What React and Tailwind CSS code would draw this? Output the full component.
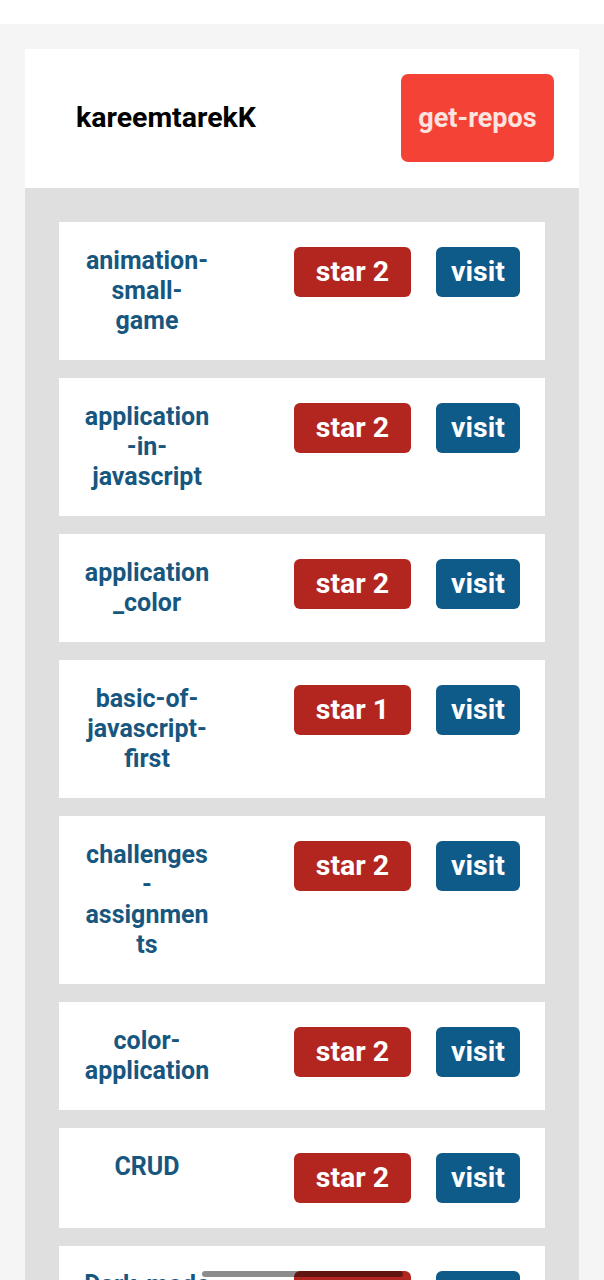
const repos = [
  { name: "animation-small-game", stars: 2 },
  { name: "application-in-javascript", stars: 2 },
  { name: "application_color", stars: 2 },
  { name: "basic-of-javascript-first", stars: 1 },
  { name: "challenges-assignments", stars: 2 },
  { name: "color-application", stars: 2 },
  { name: "CRUD", stars: 2 },
  { name: "Dark-mode", stars: 2 },
];

function RepoCard({ repo }) {
  return (
    <div className="bg-white flex justify-between items-start py-[24px] pl-[25px] pr-[25px]">
      <div className="w-[126px] text-center text-[25px] leading-[30px] font-bold text-[#17577f] [overflow-wrap:break-word]">
        {repo.name}
      </div>
      <div className="flex gap-[25px] my-[1px]">
        <button className="w-[117px] h-[50px] rounded-[6px] bg-[#b3261f] text-white text-[28.5px] font-bold">
          star {repo.stars}
        </button>
        <button className="w-[84px] h-[50px] rounded-[6px] bg-[#0e5a89] text-white text-[28.5px] font-bold">
          visit
        </button>
      </div>
    </div>
  );
}

export default function App() {
  return (
    <div className="min-h-screen bg-white font-['Roboto',sans-serif] relative overflow-hidden">
      <div className="h-[24px] bg-white" />
      <div className="bg-[#f5f5f5] px-[25px] pt-[25px] pb-[25px]">
        <div className="bg-white flex items-center justify-between pl-[51px] pr-[25px] pt-[25px] pb-[26px]">
          <h1 className="text-[28.5px] font-bold text-black">kareemtarekK</h1>
          <button className="w-[153px] h-[88px] rounded-[7px] bg-[#f44336] text-[#fde3df] text-[27px] font-bold">
            get-repos
          </button>
        </div>
        <div className="bg-[#dfdfdf] p-[34px] flex flex-col gap-[18px]">
          {repos.map((r) => (
            <RepoCard key={r.name} repo={r} />
          ))}
        </div>
      </div>
      {/* gesture bar */}
      <div className="fixed left-[202px] top-[1271px] w-[201px] h-[6px] rounded-full bg-black/45" />
    </div>
  );
}
